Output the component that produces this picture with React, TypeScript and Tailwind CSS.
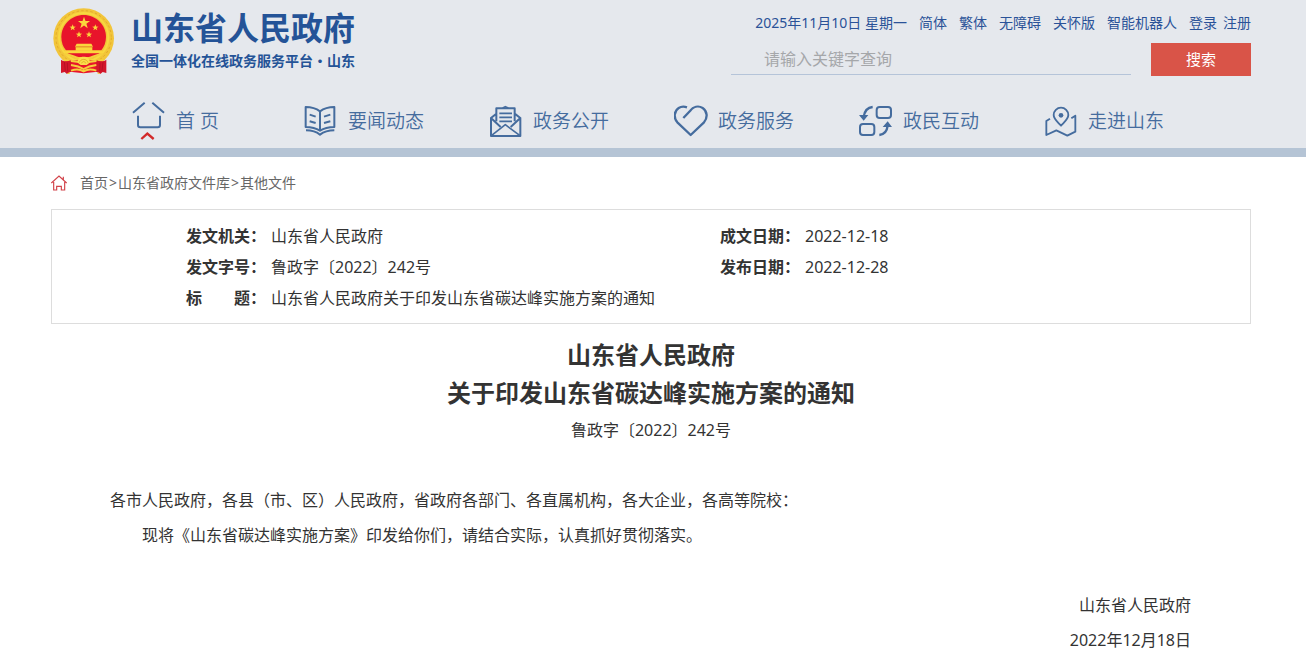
import type { ReactNode } from 'react'

const starPoints = (cx: number, cy: number, r: number) =>
  Array.from({ length: 10 }, (_, i) => {
    const radius = i % 2 === 0 ? r : r * 0.4
    const angle = (Math.PI / 5) * i - Math.PI / 2
    return `${(cx + radius * Math.cos(angle)).toFixed(1)},${(cy + radius * Math.sin(angle)).toFixed(1)}`
  }).join(' ')

function Emblem() {
  return (
    <svg viewBox="38 20 186 201" className="h-[67px] w-[62px] shrink-0" aria-hidden="true">
      <ellipse cx="130" cy="111" rx="91" ry="90" fill="#f2c53a" />
      <ellipse cx="130" cy="109" rx="83" ry="81" fill="none" stroke="#e3ab27" strokeWidth="3" strokeDasharray="7 7" />
      <ellipse cx="130" cy="108" rx="74" ry="73" fill="none" stroke="#f8d840" strokeWidth="6" />
      <path d="M130 41c37 0 67 30 67 66 0 16-6 30-14 40H77c-9-10-14-24-14-40 0-36 30-66 67-66z" fill="#e8142b" />
      <g fill="#fbd63c">
        <polygon points={starPoints(131, 65, 19)} />
        <polygon points={starPoints(97, 79, 10)} />
        <polygon points={starPoints(116, 100, 10)} />
        <polygon points={starPoints(146, 100, 10)} />
        <polygon points={starPoints(165, 79, 10)} />
        <path d="M109 127h44l5 9h-54zM106 137h50v11h-50z" />
        <path d="M75 148h110l2 8H73z" />
      </g>
      <path d="M106 137h50" stroke="#d8861c" strokeWidth="2" />
      <path d="M82 156h96l-14 10-34 8-34-8z" fill="#e8142b" />
      <path d="M66 182l50-6h28l50 6-8 28-56 6-56-6z" fill="#e8142b" />
      <path d="M72 158c18 2 28 8 42 12h32c14-4 24-10 42-12M70 176c16 2 28 4 46 6h28c18-2 30-4 46-6" fill="none" stroke="#f6cd3c" strokeWidth="6" />
      <path d="M112 184c-2-10 5-18 18-18s20 8 18 18l-9 7h-18z" fill="#fbdc4a" />
      <path d="M117 184c3-13 23-13 26 0M124 186c2-7 10-7 12 0" fill="none" stroke="#d99a1c" strokeWidth="2" />
      <path d="M62 175c8 6 20 6 29 2l4 32-15 9-7-6-11 3z" fill="#d3152a" />
      <path d="M198 175c-8 6-20 6-29 2l-4 32 15 9 7-6 11 3z" fill="#d3152a" />
      <path d="M92 191c14 2 26 5 38 12 12-7 24-10 38-12M92 208c14-5 26-5 38 2 12-7 24-7 38-2" fill="none" stroke="#f6cd3c" strokeWidth="6" />
      <path d="M72 182l3 26M81 184l1 26M188 182l-3 26M179 184l-1 26" stroke="#a90f20" strokeWidth="2" />
      <path d="M79 217l9-5v6zM181 217l-9-5v6z" fill="#f6cd3c" />
    </svg>
  )
}

function NavIcon({ children }: { children: ReactNode }) {
  return (
    <svg
      viewBox="0 0 108 120"
      className="h-10 w-9 shrink-0"
      fill="none"
      stroke="#456c9e"
      strokeWidth="6"
      strokeLinejoin="round"
      aria-hidden="true"
    >
      {children}
    </svg>
  )
}

const navItems: { label: string; icon: ReactNode }[] = [
  {
    label: '首 页',
    icon: (
      <>
        <path d="M38 5L3 35M61 5l35 30M18 44v28q0 7 7 7h52q7 0 7-7V44" />
        <path d="M28 114l18-16 19 16" stroke="#d22a2a" strokeWidth="7" strokeLinejoin="miter" />
      </>
    ),
  },
  {
    label: '要闻动态',
    icon: (
      <>
        <path d="M5 18q26 0 43 13v58Q31 78 5 78zM91 18q-26 0-43 13v58q17-11 43-11z" />
        <path d="M6 88q26 0 42 13 17-13 43-13M17 41l18 6M17 61l18 5M60 47l19-6M60 66l19-5" />
      </>
    ),
  },
  {
    label: '政务公开',
    icon: (
      <>
        <path d="M22 61V22h55v39M6 52v53h88V52M22 38L6 51l29 27M77 38l17 13-29 27" />
        <path d="M7 104l42-33 44 33M31 37h38M31 49h38M31 61h38M41 21l8-4 9 4" strokeWidth="5" />
      </>
    ),
  },
  {
    label: '政务服务',
    icon: (
      <path
        d="M28 51l20-21c10-13 25-17 38-9 14 9 16 29 4 43l-40 38L10 64C-2 50 0 30 14 21c8-5 16-5 25-2"
        strokeWidth="7"
      />
    ),
  },
  {
    label: '政民互动',
    icon: (
      <>
        <rect x="53" y="18" width="43" height="33" rx="9" />
        <rect x="3" y="69" width="43" height="33" rx="9" />
        <path d="M41 18Q18 20 14 48M61 102q22-2 25-28" strokeWidth="7" />
        <path d="M0 42h28L14 59zM71 78h28L86 61z" fill="#456c9e" stroke="none" />
      </>
    ),
  },
  {
    label: '走进山东',
    icon: (
      <>
        <path d="M51 74C40 62 29 54 29 42a22 22 0 0 1 44 0c0 12-11 20-22 32zM18 53L7 60v42l30-14 33 16 24-12V44l-12 8" strokeWidth="5.5" />
        <circle cx="51" cy="43" r="7" fill="#456c9e" stroke="none" />
      </>
    ),
  },
]

const topLinks = ['简体', '繁体', '无障碍', '关怀版', '智能机器人']

function SiteHeader() {
  return (
    <header className="border-b-[9px] border-[#b5c4d5] bg-[#e5e8ed] pr-1 text-[#2a5298]">
      <div className="mx-auto max-w-[1200px]">
        <div className="flex items-start justify-between">
          <a href="#" className="flex gap-4 pt-2 pl-0.5">
            <Emblem />
            <span className="flex flex-col font-['Noto_Sans_CJK_SC',sans-serif] font-bold text-[#245397]">
              <span className="text-[32px] leading-9">山东省人民政府</span>
              <span className="text-sm leading-8">全国一体化在线政务服务平台·山东</span>
            </span>
          </a>
          <div className="flex flex-col items-end pt-2">
            <div className="flex gap-3 text-sm leading-[30px]">
              <span>2025年11月10日 星期一</span>
              {topLinks.map((link) => (
                <a key={link} href="#">
                  {link}
                </a>
              ))}
              <span className="flex gap-1.5">
                <a href="#">登录</a>
                <a href="#">注册</a>
              </span>
            </div>
            <form className="mt-[5px] flex gap-5" onSubmit={(event) => event.preventDefault()}>
              <input
                type="text"
                aria-label="请输入关键字查询"
                placeholder="请输入关键字查询"
                className="h-8 w-[400px] border-b border-[#b5c4d9] bg-transparent pl-[33px] text-base outline-none placeholder:text-[#a5a7aa]"
              />
              <button type="submit" className="h-[33px] w-[100px] bg-[#d95448] text-[15px] text-white">
                搜索
              </button>
            </form>
          </div>
        </div>
        <nav className="grid grid-cols-6 pt-[25px] pr-[54px] pb-[7px] pl-9">
          {navItems.map((item) => (
            <a
              key={item.label}
              href="#"
              className="flex items-center justify-center gap-2 pr-px text-[19px] leading-10 text-[#456c9e] first:pr-2"
            >
              <NavIcon>{item.icon}</NavIcon>
              <span className="font-[350]">{item.label}</span>
            </a>
          ))}
        </nav>
      </div>
    </header>
  )
}

function Breadcrumb() {
  return (
    <nav className="flex items-center gap-[13px] py-3 text-sm leading-7 text-[#666]">
      <svg viewBox="0 0 48 48" className="size-4" fill="none" stroke="#d2434a" strokeWidth="3.5" aria-hidden="true">
        <path d="M1 24L24 3l23 21M37 14V5M8 21v24h9V34h14v11h10V21" />
      </svg>
      <div>
        <a href="#">首页</a>
        <span className="mx-px">&gt;</span>
        <a href="#">山东省政府文件库</a>
        <span className="mx-px">&gt;</span>
        <a href="#">其他文件</a>
      </div>
    </nav>
  )
}

function InfoTable() {
  return (
    <div className="border border-[#ddd] pt-[11px] pb-[9px] pl-[134px]">
      <table className="w-full table-fixed text-left text-base leading-[31px]">
        <colgroup>
          <col className="w-[85px]" />
          <col className="w-[449px]" />
          <col className="w-[85px]" />
          <col />
        </colgroup>
        <tbody>
          <tr>
            <th scope="row">发文机关：</th>
            <td>山东省人民政府</td>
            <th scope="row">成文日期：</th>
            <td>2022-12-18</td>
          </tr>
          <tr>
            <th scope="row">发文字号：</th>
            <td>鲁政字〔2022〕242号</td>
            <th scope="row">发布日期：</th>
            <td>2022-12-28</td>
          </tr>
          <tr>
            <th scope="row">标　　题：</th>
            <td colSpan={3}>山东省人民政府关于印发山东省碳达峰实施方案的通知</td>
          </tr>
        </tbody>
      </table>
    </div>
  )
}

export default function App() {
  return (
    <div lang="zh-CN" className="bg-white font-['Noto_Sans','Noto_Sans_CJK_SC',sans-serif] text-[#333]">
      <SiteHeader />
      <main className="pr-1">
        <div className="mx-auto max-w-[1200px]">
          <Breadcrumb />
          <InfoTable />
          <article className="pt-3 text-base leading-[35px]">
            <h1 className="text-center text-2xl leading-[38px] font-bold">
              山东省人民政府
              <br />
              关于印发山东省碳达峰实施方案的通知
            </h1>
            <p className="pt-px text-center">鲁政字〔2022〕242号</p>
            <div className="pt-[35px] pr-[60px] pl-[59px]">
              <p>各市人民政府，各县（市、区）人民政府，省政府各部门、各直属机构，各大企业，各高等院校：</p>
              <p className="indent-8">现将《山东省碳达峰实施方案》印发给你们，请结合实际，认真抓好贯彻落实。</p>
              <div className="pt-[35px] text-right">
                <p>山东省人民政府</p>
                <p>2022年12月18日</p>
              </div>
            </div>
          </article>
        </div>
      </main>
    </div>
  )
}
